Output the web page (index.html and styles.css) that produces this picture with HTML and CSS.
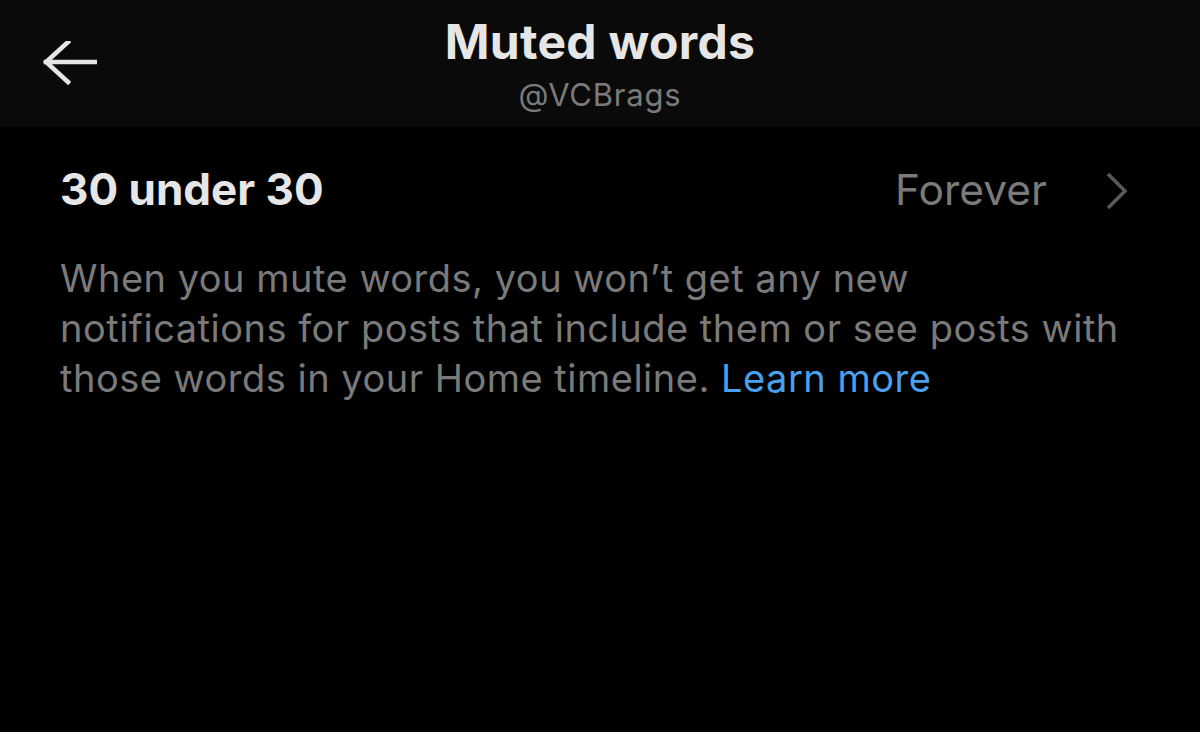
FILE: index.html
```html
<!DOCTYPE html>
<html>
<head>
  <title>Muted words</title>
  <link rel="stylesheet" href="styles.css">
</head>
<body>
  <header class="topbar">
    <button class="back" type="button" aria-label="Back">
      <svg width="54" height="46" viewBox="0 0 54 46">
        <path d="M3 21 H52 M25 1 L3 21 L25 41" fill="none" stroke="#e6e6e6" stroke-width="4.5" stroke-linecap="square" stroke-linejoin="miter"/>
      </svg>
    </button>
    <div class="heading">
      <h1 class="title">Muted words</h1>
      <div class="handle">@VCBrags</div>
    </div>
    <div class="spacer"></div>
  </header>
  <main class="content">
    <div class="word-row">
      <span class="word">30 under 30</span>
      <span class="duration">Forever</span>
      <svg class="chevron" width="22" height="38" viewBox="0 0 22 38">
        <path d="M2 2 L19 19 L2 36" fill="none" stroke="#5a5a5a" stroke-width="3.5"/>
      </svg>
    </div>
    <p class="note">
      When you mute words, you won’t get any new notifications for posts that include them or see posts with those words in your Home timeline. <a href="#" class="learn">Learn more</a>
    </p>
  </main>
</body>
</html>
```

FILE: styles.css
```css
body {
  margin: 0;
  background-color: #000000;
  font-family: Inter, "Liberation Sans", Arial, sans-serif;
  min-height: 100vh;
}
.topbar {
  display: grid;
  grid-template-columns: 1fr auto 1fr;
  align-items: start;
  height: 127px;
  background-color: #0a0a0a;
  box-sizing: border-box;
}
.back {
  justify-self: start;
  background: none;
  border: none;
  padding: 0;
  margin: 41px 0 0 43px;
  cursor: pointer;
  line-height: 0;
}
.heading {
  text-align: center;
  padding-top: 14px;
}
.title {
  margin: 0;
  font-size: 48px;
  font-weight: 700;
  line-height: 56px;
  color: #e6e6e6;
  letter-spacing: 0.3px;
}
.handle {
  margin-top: 6px;
  font-size: 31px;
  line-height: 38px;
  color: #7a7a7a;
  letter-spacing: 0.8px;
}
.content {
  padding: 0 60px;
}
.word-row {
  display: flex;
  align-items: center;
  height: 124px;
}
.word {
  flex: 1;
  font-size: 44px;
  font-weight: 700;
  color: #e6e6e6;
}
.duration {
  font-size: 42.5px;
  color: #7a7a7a;
  margin-right: 59px;
}
.chevron {
  margin-right: 12px;
  margin-top: 4px;
}
.note {
  margin: 2px 0 0;
  max-width: 1078px;
  font-size: 38px;
  line-height: 50px;
  letter-spacing: 0.5px;
  color: #7a7a7a;
}
.learn {
  color: #4aa0ec;
  text-decoration: none;
}
```
